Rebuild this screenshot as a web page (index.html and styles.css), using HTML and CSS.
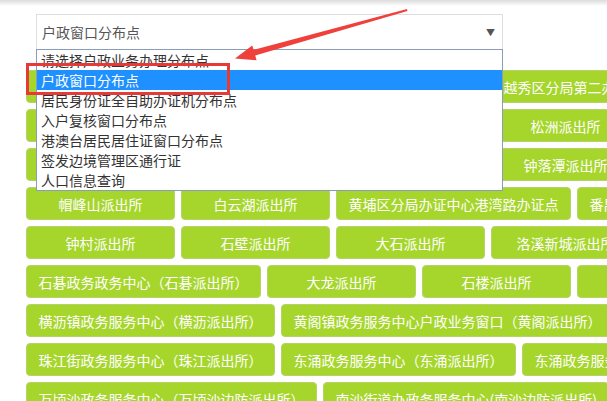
FILE: index.html
```html
<!DOCTYPE html>
<html lang="zh-CN">
<head>
  <meta charset="UTF-8" />
  <title>户政业务办理分布点</title>
  <link rel="stylesheet" href="styles.css">
</head>
<body>
  <div class="topbar"></div>

  <div class="picker">
    <div class="select">
      <span>户政窗口分布点</span>
      <span class="caret">▼</span>
    </div>
    <ul class="options">
      <li>请选择户政业务办理分布点</li>
      <li class="active">户政窗口分布点</li>
      <li>居民身份证全自助办证机分布点</li>
      <li>入户复核窗口分布点</li>
      <li>港澳台居民居住证窗口分布点</li>
      <li>签发边境管理区通行证</li>
      <li>人口信息查询</li>
    </ul>
  </div>

  <div class="stations">
    <div class="row">
      <a class="btn">流花派出所</a>
      <a class="btn">洪桥派出所</a>
      <a class="btn">光塔派出所</a>
      <a class="btn">越秀区分局第二办证中心</a>
    </div>
    <div class="row">
      <a class="btn">人和派出所</a>
      <a class="btn">太和派出所</a>
      <a class="btn">龙归派出所</a>
      <a class="btn">松洲派出所</a>
    </div>
    <div class="row">
      <a class="btn">江高派出所</a>
      <a class="btn">新市派出所</a>
      <a class="btn">嘉禾派出所</a>
      <a class="btn">钟落潭派出所</a>
    </div>
    <div class="row">
      <a class="btn">帽峰山派出所</a>
      <a class="btn">白云湖派出所</a>
      <a class="btn">黄埔区分局办证中心港湾路办证点</a>
      <a class="btn">番禺区分局办证中心</a>
    </div>
    <div class="row">
      <a class="btn">钟村派出所</a>
      <a class="btn">石壁派出所</a>
      <a class="btn">大石派出所</a>
      <a class="btn">洛溪新城派出所</a>
    </div>
    <div class="row">
      <a class="btn">石碁政务政务中心（石碁派出所）</a>
      <a class="btn">大龙派出所</a>
      <a class="btn">石楼派出所</a>
      <a class="btn">化龙派出所</a>
    </div>
    <div class="row">
      <a class="btn">横沥镇政务服务中心（横沥派出所）</a>
      <a class="btn">黄阁镇政务服务中心户政业务窗口（黄阁派出所）</a>
    </div>
    <div class="row">
      <a class="btn">珠江街政务服务中心（珠江派出所）</a>
      <a class="btn">东涌政务服务中心（东涌派出所）</a>
      <a class="btn">东涌政务服务中心（鱼窝头派出所）</a>
    </div>
    <div class="row">
      <a class="btn">万顷沙政务服务中心（万顷沙边防派出所）</a>
      <a class="btn">南沙街道办政务服务中心(南沙边防派出所)</a>
    </div>
  </div>

  <!-- annotation layer -->
  <div class="mark"></div>
  <svg class="arrow" width="607" height="80" viewBox="0 0 607 80">
    <polygon points="235,58.5 252.2,45.6 253.6,49.8 407,9 407.4,11 255.2,55.6 256.6,60.2" fill="#f0403c"/>
  </svg>
</body>
</html>
```

FILE: styles.css
```css
body {
  margin: 0;
  background: #fff;
  font-family: "Noto Sans CJK SC", "Microsoft YaHei", sans-serif;
  font-size: 14px;
  overflow: hidden;
  position: relative;
  width: 607px;
  height: 401px;
}
.topbar {
  height: 6px;
  background: linear-gradient(#dcdcdc, #fff);
}
.picker {
  position: relative;
  margin: 8px 0 0 36px;
  width: 467px;
  z-index: 2;
}
.select {
  height: 35px;
  box-sizing: border-box;
  border: 1px solid #dedede;
  border-bottom: none;
  display: flex;
  align-items: center;
  justify-content: space-between;
  padding: 0 7px 0 5px;
  color: #555;
}
.caret {
  font-size: 9px;
  color: #555;
}
.options {
  position: absolute;
  top: 35px;
  left: 0;
  width: 467px;
  box-sizing: border-box;
  margin: 0;
  padding: 0;
  list-style: none;
  background: #fff;
  border: 1px solid #8a9cb8;
  color: #333;
}
.options li {
  height: 20px;
  line-height: 20px;
  padding-left: 4px;
}
.options li.active {
  background: #1e90ff;
  color: #fff;
}
.stations {
  margin: 21px 0 0 26px;
  display: flex;
  flex-direction: column;
  gap: 6px;
}
.row {
  display: flex;
  gap: 6px;
  white-space: nowrap;
}
.btn {
  flex: none;
  min-width: 149px;
  height: 33px;
  box-sizing: border-box;
  padding: 0 11.5px;
  border: 1px solid #b4d46a;
  border-radius: 4px;
  background: #a6d62c;
  color: #fff;
  display: flex;
  align-items: center;
  justify-content: center;
}
.mark {
  position: absolute;
  left: 26px;
  top: 63px;
  width: 204px;
  height: 32px;
  box-sizing: border-box;
  border: 3px solid #e53a38;
  z-index: 3;
}
.arrow {
  position: absolute;
  left: 0;
  top: 0;
  z-index: 4;
}
```
